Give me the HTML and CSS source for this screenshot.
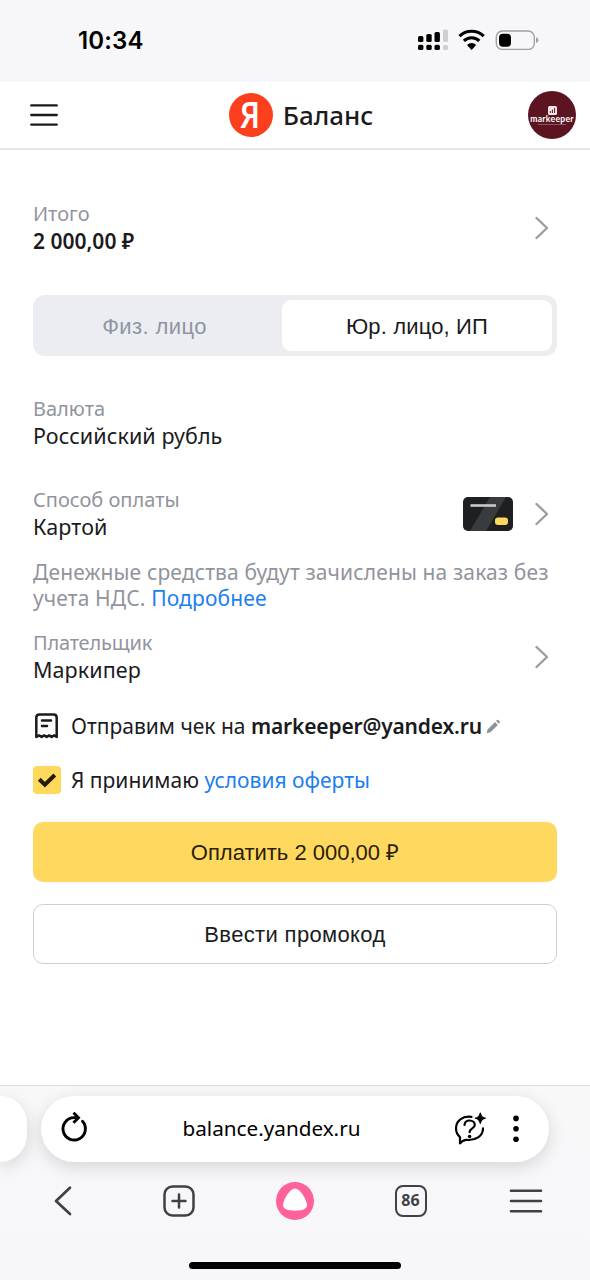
FILE: index.html
```html
<!DOCTYPE html>
<html lang="ru">
<head>
<meta charset="utf-8">
<title>Баланс</title>
<link rel="stylesheet" href="styles.css">
</head>
<body>
<div class="screen">
  <div class="status">
    <span class="clock">10:34</span>
    <svg class="status-icons" width="122" height="26" viewBox="0 0 122 26">
      <g fill="#000">
        <rect x="1" y="9" width="5.4" height="6" rx="1.5"/><rect x="9.3" y="7" width="5.4" height="8" rx="1.5"/><rect x="17.5" y="5" width="5.4" height="10" rx="1.5"/>
        <rect x="1" y="17.7" width="5.4" height="5.4" rx="1.5"/><rect x="9.3" y="17.7" width="5.4" height="5.4" rx="1.5"/><rect x="17.5" y="17.7" width="5.4" height="5.4" rx="1.5"/>
      </g>
      <g fill="#cfcfd1"><rect x="26" y="2.5" width="5" height="12.5" rx="1.5"/><rect x="26" y="18" width="5" height="5" rx="1.5"/></g>
      <g fill="none" stroke="#000" stroke-width="3.2">
        <path d="M42.5 9.2a17.3 17.3 0 0 1 24.2 0"/>
        <path d="M46.9 13.9a11 11 0 0 1 15.4 0"/>
      </g>
      <path d="M50 17.9a6.8 6.8 0 0 1 9.2 0l-4.6 5z"/>
      <rect x="79.3" y="4" width="38" height="18.400" rx="6" fill="none" stroke="#a1a1a3" stroke-width="1.4"/>
      <rect x="82" y="6.8" width="12" height="13" rx="4"/>
      <path d="M119 10.300q2.400 .7 2.400 2.900t-2.400 2.900z" fill="#a1a1a3"/>
    </svg>
  </div>

  <header class="header">
    <svg class="burger" width="28" height="24" viewBox="0 0 28 24" stroke="#1b1b1d" stroke-width="2.4" stroke-linecap="round"><path d="M1.3 2.4h25.4M1.3 12h25.4M1.3 21.6h25.4"/></svg>
    <div class="brand"><span class="logo"><span class="logo-letter">Я</span></span><span class="brand-name">Баланс</span></div>
    <div class="avatar">
      <svg width="9" height="9" viewBox="0 0 9 9"><rect width="9" height="9" rx="1.5" fill="#f3e9ea"/><path d="M2.3 7V5M4.4 7V3.6M6.6 7V2" stroke="#5b1420"/></svg>
      <span class="avatar-name">markeeper</span>
      <span class="avatar-line"></span>
    </div>
  </header>

  <main class="main">
    <section class="row total">
      <div class="field"><span class="label">Итого</span><span class="value sum">2 000,00 ₽</span></div>
      <svg class="chev" width="14" height="24" viewBox="0 0 14 24"><path d="M1.5 2 12 12 1.5 22"/></svg>
    </section>

    <div class="tabs">
      <span class="tab">Физ. лицо</span>
      <span class="tab active">Юр. лицо, ИП</span>
    </div>

    <section class="row currency">
      <div class="field"><span class="label">Валюта</span><span class="value">Российский рубль</span></div>
    </section>

    <section class="row method">
      <div class="field"><span class="label">Способ оплаты</span><span class="value">Картой</span></div>
      <svg class="card" width="50" height="34" viewBox="0 0 50 34">
        <rect width="50" height="34" rx="5" fill="#1d1f21"/>
        <path d="M27 0h16L23 34H7z" fill="#393c3f"/>
        <path d="M7.5 8.5h25.5" stroke="#c9cacc" stroke-width="2.6"/>
        <rect x="32" y="20.5" width="13" height="7.6" rx="3" fill="#ffd95c"/>
      </svg>
      <svg class="chev" width="14" height="24" viewBox="0 0 14 24"><path d="M1.5 2 12 12 1.5 22"/></svg>
    </section>

    <p class="note">Денежные средства будут зачислены на заказ без<br>учета НДС. <a class="link">Подробнее</a></p>

    <section class="row payer">
      <div class="field"><span class="label payer-label">Плательщик</span><span class="value">Маркипер</span></div>
      <svg class="chev" width="14" height="24" viewBox="0 0 14 24"><path d="M1.5 2 12 12 1.5 22"/></svg>
    </section>

    <div class="line receipt">
      <svg class="bill" width="28" height="28" viewBox="0 0 28 28" fill="none" stroke="#1b1b1d" stroke-width="2.5" stroke-linejoin="round" stroke-linecap="round">
        <path d="M3.300 25V5.500Q3.300 2.500 6.500 2.500h14Q23.700 2.500 23.700 5.500V25l-2.600-1.600-2.500 1.600-2.400-1.600-2.500 1.600-2.500-1.600L8.600 25l-2.500-1.600z"/>
        <path d="M9 8.500h9M9 14h5"/>
      </svg>
      <span class="line-text">Отправим чек на <b class="mail">markeeper@yandex.ru</b></span>
      <svg class="pencil" width="15" height="15" viewBox="0 0 15 15" fill="#8e929b"><path d="M.7 14.300l.8-3.900L9 3l2.900 2.900-7.400 7.400zM10 2l1-.9Q11.800.5 12.600 1.200l1 1Q14.300 3 13.700 3.800l-.9 1z"/></svg>
    </div>

    <div class="line offer">
      <span class="check"><svg width="28" height="28" viewBox="0 0 28 28" fill="none" stroke="#251b05" stroke-width="4"><path d="M6.300 13.200l5.600 5.400L21.800 9"/></svg></span>
      <span class="line-text">Я принимаю <a class="link">условия оферты</a></span>
    </div>

    <div class="btn pay">Оплатить 2 000,00 ₽</div>
    <div class="btn promo">Ввести промокод</div>
  </main>

  <footer class="browser">
    <div class="address-row">
      <div class="prev-tab"></div>
      <div class="address">
        <svg class="reload" width="32" height="34" viewBox="0 0 32 34" fill="none" stroke="#000" stroke-width="2.900" stroke-linecap="round" stroke-linejoin="round"><path d="M24.500 9.300A11.200 11.200 0 1 1 16 5.600h3.500"/><path d="M15.500 .7l5 5-5 5" stroke-linecap="butt" stroke-linejoin="miter"/></svg>
        <span class="url">balance.yandex.ru</span>
        <svg class="ask" width="34" height="34" viewBox="0 0 34 34" fill="none" stroke="#000" stroke-width="2.200" stroke-linecap="round" stroke-linejoin="round">
          <path d="M18.500 4.800C9.500 3.400 3 9 3 16.300c0 3.500 1.500 6.700 4 8.800v6.300c2-2.300 4-3.500 6.500-3.500 9 .8 16.500-3.700 16.500-11.500"/>
          <path d="M11.500 13c.2-2.800 2.200-4.500 5.100-4.500 3 0 5.200 1.800 5.200 4.500 0 3.600-5.200 3.300-5.200 7.200"/>
          <circle cx="16.600" cy="24.500" r="1.800" fill="#000" stroke="none"/>
          <path d="M27.300 1c.7 3.400 1.700 4.500 5 5.200-3.300.7-4.300 1.800-5 5.200-.7-3.400-1.700-4.500-5-5.200 3.300-.7 4.300-1.800 5-5.200z" fill="#000" stroke-width="1.200"/>
        </svg>
        <svg class="dots" width="8" height="28" viewBox="0 0 8 28"><circle cx="4" cy="3.400" r="2.800"/><circle cx="4" cy="13.800" r="2.800"/><circle cx="4" cy="24.200" r="2.800"/></svg>
      </div>
    </div>
    <nav class="nav">
      <span class="nav-item"><svg width="18" height="32" viewBox="0 0 18 32" fill="none" stroke="#414145" stroke-width="2.700" stroke-linecap="round" stroke-linejoin="round"><path d="M16 2.800 2 16l14 13"/></svg></span>
      <span class="nav-item"><svg width="32" height="32" viewBox="0 0 32 32" fill="none" stroke="#414145" stroke-width="2.500" stroke-linecap="round"><rect x="1.500" y="1.500" width="29" height="29" rx="8"/><path d="M16 9.500v13M9.500 16h13"/></svg></span>
      <span class="nav-item"><svg width="38" height="38" viewBox="0 0 38 38"><circle cx="19" cy="19" r="19" fill="#ff619a"/><path d="M19 6.500C24 6.500 30.500 17 31 23c.2 3.800-4.500 5.700-12 5.700S6.800 26.800 7 23C7.500 17 14 6.500 19 6.500z" fill="#fff"/></svg></span>
      <span class="nav-item"><span class="tabs-count">86</span></span>
      <span class="nav-item"><svg width="34" height="26" viewBox="0 0 34 26" stroke="#414145" stroke-width="2.600" stroke-linecap="round"><path d="M2 2.700h30M2 13h30M2 23.300h30"/></svg></span>
    </nav>
    <div class="home"></div>
  </footer>
</div>
</body>
</html>
```
FILE: styles.css
```css
* { box-sizing: border-box; }
body { margin: 0; background: #fff; font-family: "Noto Sans", sans-serif; color: #1b1b1d; }
svg { display: block; flex: none; }
.screen { width: 590px; height: 1280px; display: flex; flex-direction: column; overflow: hidden; white-space: nowrap; }

.status { height: 82px; background: #f7f7f9; display: flex; justify-content: space-between; padding: 25px 51px 0 78px; }
.clock { font: 600 24px/31px Inter, sans-serif; color: #000; letter-spacing: .15px; }
.status-icons { margin-top: 2px; }

.header { height: 68px; border-bottom: 2px solid #e6e6e7; display: grid; grid-template-columns: 1fr auto 1fr; align-items: center; padding: 0 14px 0 30px; }
.brand { display: flex; align-items: center; gap: 10px; margin-left: -4px; }
.logo { width: 44px; height: 44px; border-radius: 50%; background: #fc3f1d; color: #fff; font: 600 36px/43px "Noto Sans", sans-serif; text-align: center; }
.logo-letter { display: block; transform: scaleX(.85); margin-left: -2px; }
.brand-name { font-size: 26px; font-weight: 500; line-height: 32px; }
.avatar { justify-self: end; width: 48px; height: 48px; border-radius: 50%; background: #5b1420; display: flex; flex-direction: column; align-items: center; padding-top: 15px; }
.avatar-name { font: 700 8.6px/8px Lato, sans-serif; color: #fff; letter-spacing: .3px; }
.avatar-line { width: 28px; height: 1px; margin-top: 1px; background: #8b5860; }

.main { height: 935px; padding: 50px 33px 0; }
.row { display: flex; align-items: center; height: 56px; padding-right: 8px; }
.field { display: flex; flex-direction: column; align-items: flex-start; align-self: flex-start; flex: 1; }
.label { font-size: 20px; line-height: 27px; color: #91949c; }
.payer-label { letter-spacing: -.2px; }
.value { font-size: 21.5px; line-height: 27px; letter-spacing: .08px; }
.sum { font-size: 21px; font-weight: 600; margin-top: 1px; letter-spacing: 0; }
.chev { fill: none; stroke: #9b9da3; stroke-width: 2.4; stroke-linecap: round; stroke-linejoin: round; }

.tabs { margin-top: 39px; height: 61px; border-radius: 12px; background: #ebedf2; border: 5px solid #ededf0; border-left-width: 0; display: grid; grid-template-columns: 249px 1fr; }
.tab { display: flex; align-items: center; justify-content: center; font: 22px "Liberation Sans", sans-serif; letter-spacing: .4px; color: #8f95a2; padding: 2px 6px 0 0; }
.active { background: #fff; border-radius: 9px; color: #1b1b1d; padding: 2px 0 0; letter-spacing: .15px; }

.currency { margin-top: 39px; }
.method { margin-top: 35px; }
.card { margin-right: 22px; }
.note { margin: 17px 0 0; font-size: 21px; line-height: 26px; letter-spacing: .13px; color: #91949c; }
.link { color: #1a7ff0; }
.payer { margin-top: 18px; }

.line { display: flex; align-items: center; height: 30px; }
.line-text { font-size: 21px; margin-left: 10px; }
.receipt { margin-top: 26px; }
.mail { font-weight: 600; letter-spacing: -.17px; }
.pencil { margin-left: 4px; }
.offer { margin-top: 24px; }
.offer .line-text { padding-bottom: 1px; }
.check { width: 28px; height: 28px; border-radius: 4px; background: #ffd95c; }

.btn { height: 60px; border-radius: 10px; display: flex; align-items: center; justify-content: center; font: 22px "Liberation Sans", sans-serif; }
.pay { margin-top: 27px; padding-bottom: 3px; background: #ffd95f; color: #2b2008; }
.promo { margin-top: 22px; padding-top: 2px; border: 1px solid #cfcfd2; letter-spacing: .35px; }

.browser { flex: 1; border-top: 1px solid #dcdcde; background: linear-gradient(#f8f8f9, #f7f7fa); display: flex; flex-direction: column; align-items: center; }
.address-row { align-self: stretch; display: flex; gap: 14px; margin-top: 10px; }
.prev-tab { width: 27px; height: 66px; border-radius: 0 33px 33px 0; background: #fff; box-shadow: 0 5px 18px rgba(0,0,0,.14); }
.address { width: 508px; height: 66px; border-radius: 33px; background: #fff; box-shadow: 0 5px 18px rgba(0,0,0,.14); display: flex; align-items: center; padding: 0 29px 0 17px; }
.url { flex: 1; text-align: center; font-size: 20.7px; color: #000; padding-bottom: 2px; }
.ask { margin-right: 25px; }
.nav { align-self: stretch; height: 78px; display: grid; grid-template-columns: repeat(5, 115.7px); padding-left: 5.6px; }
.nav-item { display: flex; align-items: center; justify-content: center; }
.tabs-count { width: 32px; height: 32px; border: 2.5px solid #414145; border-radius: 8px; font-size: 16px; font-weight: 700; line-height: 27px; text-align: center; color: #414145; }
.home { width: 212px; height: 7px; margin-top: 22px; border-radius: 4px; background: #000; }
```
